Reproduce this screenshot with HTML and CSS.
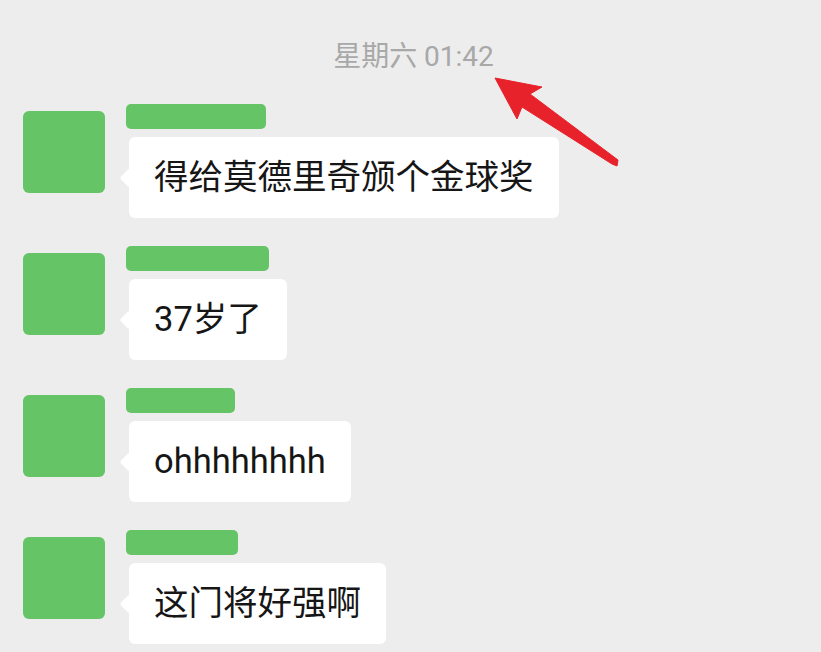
FILE: index.html
```html
<!DOCTYPE html>
<html lang="zh-CN">
<head>
<meta charset="utf-8">
<title>Chat</title>
<link rel="stylesheet" href="styles.css">
</head>
<body>
<div class="chat">
  <div class="time">星期六 01:42</div>
  <div class="list">
    <div class="row">
      <div class="avatar"></div>
      <div class="content">
        <div class="name" style="width:140px"></div>
        <div class="bubble">得给莫德里奇颁个金球奖</div>
      </div>
    </div>
    <div class="row">
      <div class="avatar"></div>
      <div class="content">
        <div class="name" style="width:143px"></div>
        <div class="bubble">37岁了</div>
      </div>
    </div>
    <div class="row">
      <div class="avatar"></div>
      <div class="content">
        <div class="name" style="width:109px"></div>
        <div class="bubble">ohhhhhhhh</div>
      </div>
    </div>
    <div class="row">
      <div class="avatar"></div>
      <div class="content">
        <div class="name" style="width:112px"></div>
        <div class="bubble">这门将好强啊</div>
      </div>
    </div>
  </div>
  <svg class="arrow" width="821" height="652" viewBox="0 0 821 652">
    <polygon points="495,78 542,87 530,94 618,160 617,166 612,164 522,107 517,119" fill="#e8222a" stroke="#e8222a" stroke-width="1" stroke-linejoin="round"/>
  </svg>
</div>
</body>
</html>
```
FILE: styles.css
```css
html, body {
  margin: 0;
  padding: 0;
  background: #ededed;
}
.chat {
  position: relative;
  width: 821px;
  height: 652px;
  overflow: hidden;
  font-family: "Roboto", "Noto Sans CJK SC", sans-serif;
}
.time {
  padding-top: 41px;
  padding-left: 6px;
  text-align: center;
  font-size: 28px;
  line-height: 32px;
  color: #a8a8a8;
}
.list {
  display: flex;
  flex-direction: column;
  gap: 28px;
  padding-top: 31px;
  padding-left: 23px;
}
.row {
  display: flex;
  align-items: flex-start;
  gap: 21px;
}
.avatar {
  width: 82px;
  height: 82px;
  margin-top: 7px;
  border-radius: 6px;
  background: #65c466;
  flex: none;
}
.content {
  display: flex;
  flex-direction: column;
  align-items: flex-start;
  gap: 8px;
}
.name {
  height: 25px;
  border-radius: 5px;
  background: #65c466;
}
.bubble {
  position: relative;
  margin-left: 3px;
  padding: 18px 25px;
  font-size: 34.5px;
  line-height: 45px;
  color: #161616;
  background: #ffffff;
  border-radius: 6px;
  white-space: nowrap;
}
.bubble::before {
  content: "";
  position: absolute;
  left: -9px;
  top: 50%;
  width: 18px;
  height: 18px;
  margin-top: -9px;
  background: #ffffff;
  border-radius: 3px;
  transform: rotate(45deg) scale(0.75, 0.75);
}
.arrow {
  position: absolute;
  left: 0;
  top: 0;
}
```
